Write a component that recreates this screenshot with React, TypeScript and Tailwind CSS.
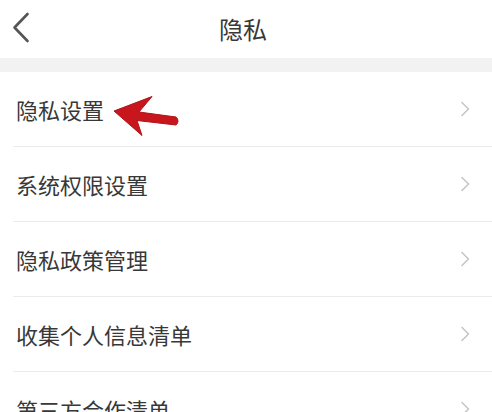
const items = ["隐私设置", "系统权限设置", "隐私政策管理", "收集个人信息清单", "第三方合作清单"];

function ChevronRight() {
  return (
    <svg width="10" height="16" viewBox="0 0 10 16" fill="none">
      <path d="M2 1.5 L8.5 8 L2 14.5" stroke="#c6c6c6" strokeWidth="1.6" strokeLinecap="round" strokeLinejoin="round" />
    </svg>
  );
}

export default function App() {
  return (
    <div
      className="relative h-[412px] w-[492px] overflow-hidden bg-white"
      style={{ fontFamily: '"Noto Sans CJK SC", "Noto Sans", sans-serif' }}
    >
      <header className="relative flex h-[58px] items-center justify-center bg-white pr-[6px]">
        <button className="absolute left-[12px] top-[12px]">
          <svg width="18" height="32" viewBox="0 0 18 32" fill="none">
            <path d="M15.5 2 L2.5 15.5 L15.5 29" stroke="#555" strokeWidth="2.6" strokeLinecap="round" strokeLinejoin="round" />
          </svg>
        </button>
        <h1 className="text-[24px] font-normal leading-none text-[#383838]">隐私</h1>
      </header>
      <div className="h-[14px] bg-[#f2f2f2]" />
      <ul>
        {items.map((label) => (
          <li key={label} className="ml-[13px] flex h-[75px] items-center justify-between border-b border-[#ebebeb] pl-[3px] pr-[22px]">
            <span className="text-[22px] leading-none text-[#383838]">{label}</span>
            <ChevronRight />
          </li>
        ))}
      </ul>

      <svg className="absolute left-[110px] top-[92px]" width="74" height="48" viewBox="110 92 74 48">
        <path
          d="M114 111 L152 96.5 L139 112 L176 117 Q180 121 176 125 L137 120.5 L142 135.5 Z"
          fill="#c8161d"
          stroke="#b01218"
          strokeWidth="1"
          strokeLinejoin="round"
        />
      </svg>
    </div>
  );
}
